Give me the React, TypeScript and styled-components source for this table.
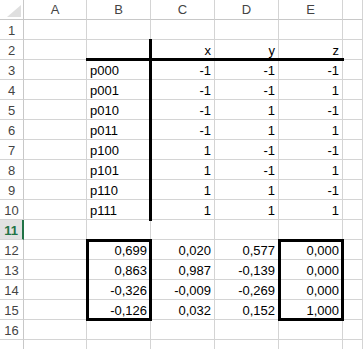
import React from 'react';
import styled, { createGlobalStyle } from 'styled-components';

const GlobalStyle = createGlobalStyle`
    html, body {
        margin: 0;
        padding: 0;
        background: #ffffff;
        overflow: hidden;
    }
`;

const COLS = ['A', 'B', 'C', 'D', 'E', 'F'];
const ROW_COUNT = 17;
const LAST_LABELED_ROW = 16;
const ACTIVE_ROW = 11;

const Sheet = styled.div`
    display: grid;
    grid-template-columns: 24px 63px 64px 64px 64px 64px 20px;
    grid-template-rows: 20px repeat(${ROW_COUNT}, 20px);
    width: 363px;
    height: 349px;
    overflow: hidden;
    background: #ffffff;
    font-family: 'Liberation Sans', Arial, sans-serif;
    font-size: 13px;
    color: #000000;
`;

const Corner = styled.div`
    display: flex;
    align-items: flex-end;
    justify-content: flex-end;
    padding: 0 2px 2px 0;
    border-right: 1px solid #c8c8c8;
    border-bottom: 1px solid #c8c8c8;
    box-sizing: border-box;
`;

const ColHead = styled.div`
    display: flex;
    align-items: center;
    justify-content: center;
    border-right: 1px solid #d4d4d4;
    border-bottom: 1px solid #c8c8c8;
    box-sizing: border-box;
    color: #444444;
    line-height: 15px;
    overflow: hidden;
`;

const RowHead = styled.div<{ $active?: boolean }>`
    display: flex;
    align-items: flex-end;
    justify-content: center;
    padding-bottom: 1px;
    border-right: ${p => (p.$active ? '2px solid #217346' : '1px solid #c8c8c8')};
    border-bottom: 1px solid #d4d4d4;
    box-sizing: border-box;
    background: ${p => (p.$active ? '#e1e1e1' : '#ffffff')};
    color: ${p => (p.$active ? '#217346' : '#444444')};
    font-weight: ${p => (p.$active ? 700 : 400)};
    line-height: 15px;
`;

type Edges = { t?: boolean; r?: boolean; b?: boolean; l?: boolean };

const Cell = styled.div<{ $align: 'left' | 'right'; $edges: Edges }>`
    position: relative;
    display: flex;
    align-items: flex-end;
    justify-content: ${p => (p.$align === 'right' ? 'flex-end' : 'flex-start')};
    padding: 0 3px 1px 3px;
    border-right: 1px solid #d4d4d4;
    border-bottom: 1px solid #d4d4d4;
    box-sizing: border-box;
    line-height: 15px;
    white-space: nowrap;

    &::after {
        content: '';
        position: absolute;
        z-index: 1;
        top: -1px;
        left: -1px;
        right: -2px;
        bottom: -2px;
        border-style: solid;
        border-color: #000000;
        border-width: ${({ $edges: e }) =>
            `${e.t ? 3 : 0}px ${e.r ? 3 : 0}px ${e.b ? 3 : 0}px ${e.l ? 3 : 0}px`};
        pointer-events: none;
    }
`;

const CornerMark = () => (
    <svg width="14" height="12" viewBox="0 0 14 12">
        <polygon points="14,0 14,12 0,12" fill="#dfdfdf" />
    </svg>
);

// row number -> values for columns A..F
const data: Record<number, string[]> = {
    2: ['', '', 'x', 'y', 'z'],
    3: ['', 'p000', '-1', '-1', '-1'],
    4: ['', 'p001', '-1', '-1', '1'],
    5: ['', 'p010', '-1', '1', '-1'],
    6: ['', 'p011', '-1', '1', '1'],
    7: ['', 'p100', '1', '-1', '-1'],
    8: ['', 'p101', '1', '-1', '1'],
    9: ['', 'p110', '1', '1', '-1'],
    10: ['', 'p111', '1', '1', '1'],
    12: ['', '0,699', '0,020', '0,577', '0,000'],
    13: ['', '0,863', '0,987', '-0,139', '0,000'],
    14: ['', '-0,326', '-0,009', '-0,269', '0,000'],
    15: ['', '-0,126', '0,032', '0,152', '1,000'],
};

const edgesFor = (row: number, col: number): Edges => {
    const e: Edges = {};
    // header table: line under row 2, line right of B
    if (row === 2 && col >= 1 && col <= 4) e.b = true;
    if (col === 1 && row >= 2 && row <= 10) e.r = true;
    // result boxes B12:B15 and E12:E15
    if ((col === 1 || col === 4) && row >= 12 && row <= 15) {
        e.l = true;
        e.r = true;
        if (row === 12) e.t = true;
        if (row === 15) e.b = true;
    }
    return e;
};

const alignFor = (value: string): 'left' | 'right' => (/^p\d/.test(value) ? 'left' : 'right');

export default function App() {
    const rows = Array.from({ length: ROW_COUNT }, (_, i) => i + 1);

    return (
        <>
            <GlobalStyle />
            <Sheet>
                <Corner>
                    <CornerMark />
                </Corner>
                {COLS.map(c => (
                    // F is scrolled mostly out of view, its letter falls outside
                    <ColHead key={c}>{c === 'F' ? '' : c}</ColHead>
                ))}
                {rows.map(r => (
                    <React.Fragment key={r}>
                        <RowHead $active={r === ACTIVE_ROW}>{r <= LAST_LABELED_ROW ? r : ''}</RowHead>
                        {COLS.map((c, ci) => {
                            const value = data[r]?.[ci] ?? '';
                            return (
                                <Cell key={c} $align={alignFor(value)} $edges={edgesFor(r, ci)}>
                                    {value}
                                </Cell>
                            );
                        })}
                    </React.Fragment>
                ))}
            </Sheet>
        </>
    );
}
